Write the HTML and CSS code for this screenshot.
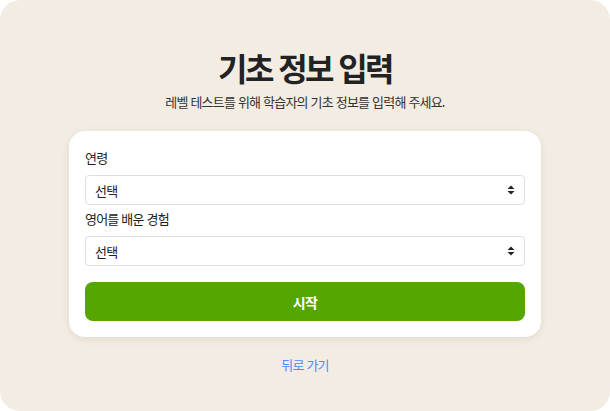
FILE: index.html
```html
<!DOCTYPE html>
<html lang="ko">
<head>
<meta charset="utf-8">
<title>기초 정보 입력</title>
<link rel="stylesheet" href="styles.css">
</head>
<body>
<main class="page">
  <h1 class="title">기초 정보 입력</h1>
  <p class="subtitle">레벨 테스트를 위해 학습자의 기초 정보를 입력해 주세요.</p>
  <form class="card">
    <label class="label" for="age">연령</label>
    <div class="select-wrap">
      <select id="age" class="select"><option>선택</option></select>
      <svg class="caret" width="8" height="10" viewBox="0 0 8 10"><path d="M4 0.5 L7.5 4 H0.5 Z M4 9.5 L7.5 6 H0.5 Z" fill="#222"/></svg>
    </div>
    <label class="label" for="exp">영어를 배운 경험</label>
    <div class="select-wrap">
      <select id="exp" class="select"><option>선택</option></select>
      <svg class="caret" width="8" height="10" viewBox="0 0 8 10"><path d="M4 0.5 L7.5 4 H0.5 Z M4 9.5 L7.5 6 H0.5 Z" fill="#222"/></svg>
    </div>
    <button type="button" class="start">시작</button>
  </form>
  <a class="back" href="#">뒤로 가기</a>
</main>
</body>
</html>
```

FILE: styles.css
```css
html, body {
  margin: 0;
  padding: 0;
  background: #ffffff;
}

body {
  font-family: "Noto Sans CJK KR", "Noto Sans", sans-serif;
  color: #222;
}

.page {
  width: 610px;
  height: 411px;
  box-sizing: border-box;
  background: #f3ece2;
  border-radius: 20px;
  display: flex;
  flex-direction: column;
  align-items: center;
  padding-top: 47px;
}

.title {
  margin: 0;
  font-size: 32px;
  line-height: 40px;
  font-weight: 700;
  color: #222;
  letter-spacing: -2.6px;
}

.subtitle {
  margin: 5px 0 0;
  font-size: 13px;
  line-height: 20px;
  color: #333;
  letter-spacing: -0.8px;
}

.card {
  margin-top: 19px;
  width: 472px;
  box-sizing: border-box;
  background: #fff;
  border-radius: 16px;
  padding: 16px;
  display: flex;
  flex-direction: column;
  box-shadow: 0 2px 8px rgba(0, 0, 0, 0.08);
}

.label {
  font-size: 13px;
  line-height: 22px;
  color: #222;
  margin-bottom: 6px;
  letter-spacing: -0.8px;
}

.select-wrap {
  position: relative;
  margin-bottom: 3px;
}

.select {
  display: block;
  width: 100%;
  height: 30px;
  box-sizing: border-box;
  appearance: none;
  -webkit-appearance: none;
  border: 1px solid #dcdfe4;
  border-radius: 4px;
  background: #fff;
  padding: 0 9px;
  font-family: inherit;
  font-size: 13px;
  letter-spacing: -0.8px;
  color: #222;
}

.caret {
  position: absolute;
  right: 10px;
  top: 10px;
  pointer-events: none;
}

.start {
  margin-top: 13px;
  height: 39px;
  border: none;
  border-radius: 8px;
  background: #55a600;
  color: #fff;
  font-family: inherit;
  font-size: 14px;
  font-weight: 700;
  letter-spacing: -0.6px;
}

.back {
  margin-top: 18px;
  font-size: 13px;
  line-height: 20px;
  color: #4b8df8;
  text-decoration: none;
  letter-spacing: -0.8px;
}
```
